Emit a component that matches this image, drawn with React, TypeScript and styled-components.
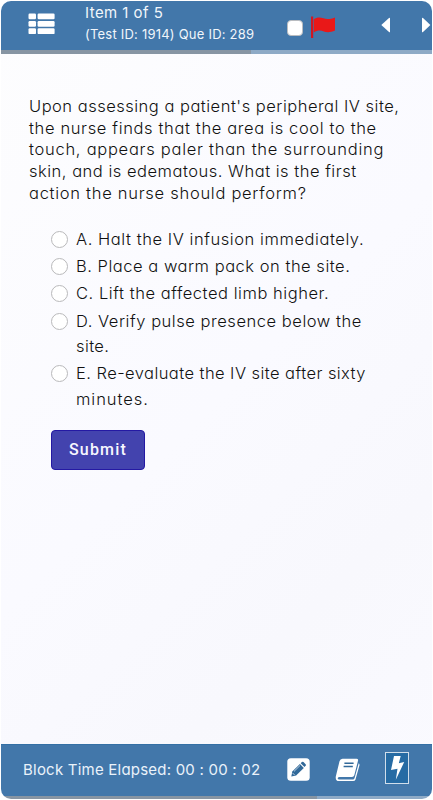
import React from 'react';
import styled, { createGlobalStyle } from 'styled-components';

const GlobalStyle = createGlobalStyle`
  * { box-sizing: border-box; }
  body {
    margin: 0;
    background: #fff;
    font-family: Inter, 'Open Sans', sans-serif;
    font-feature-settings: 'cv11';
  }
`;

const Screen = styled.main`
  width: 433px;
  height: 800px;
  padding: 1px;
  background: #fff;
`;

const Panel = styled.div`
  height: 798px;
  display: flex;
  flex-direction: column;
  overflow: hidden;
  border-radius: 10px;
  background: linear-gradient(135deg, #fdfdfe 0%, #fafaff 50%, #f8f8fd 75%, #fafaff 100%);
`;

const Header = styled.header`
  height: 49px;
  flex: none;
  display: flex;
  align-items: center;
  padding-left: 27px;
  background: #4277aa;
  color: #f1f6fb;
`;

const Track = styled.div<{ $thumb: number; $height: number }>`
  flex: none;
  height: ${(p) => p.$height}px;
  background: linear-gradient(to right, #8795a3 ${(p) => p.$thumb}px, #8eaac6 ${(p) => p.$thumb}px);
`;

const Titles = styled.div`
  width: 202px;
  margin-left: 30px;
  padding-bottom: 5px;
  display: flex;
  flex-direction: column;
`;

const TextLine = styled.span<{ $spacing: number }>`
  display: block;
  white-space: nowrap;
  letter-spacing: ${(p) => p.$spacing}px;
`;

const ItemTitle = styled(TextLine)`
  font-size: 15px;
  line-height: 22px;
`;

const ItemIds = styled(TextLine)`
  font-size: 13px;
  line-height: 20px;
`;

const MarkBox = styled.input`
  appearance: none;
  width: 16px;
  height: 16px;
  margin: 5px 7px 0 0;
  border: 1px solid #b9bcc0;
  border-radius: 4px;
  background: #fff;
`;

const IconButton = styled.button<{ $left?: number; $top?: number }>`
  display: flex;
  flex: none;
  padding: 0;
  margin-left: ${(p) => p.$left ?? 0}px;
  margin-top: ${(p) => p.$top ?? 0}px;
  border: 0;
  background: none;
  color: #fff;
`;

const Content = styled.section`
  flex: 1;
  padding: 42px 20px 0 28px;
  color: #111;
`;

const Question = styled.p`
  margin: 0;
  font-size: 16.5px;
  font-weight: 350;
  line-height: 21.7px;
`;

const Options = styled.div`
  margin: 22.5px 0 0 22px;
  display: flex;
  flex-direction: column;
  gap: 1.6px;
`;

const Option = styled.label`
  display: flex;
  align-items: flex-start;
  gap: 8px;
  font-size: 16.5px;
  font-weight: 350;
  line-height: 25.6px;
`;

const Radio = styled.input`
  appearance: none;
  width: 17px;
  height: 17px;
  flex: none;
  margin: 4px 0 0;
  border: 1px solid #b9b9bb;
  border-radius: 50%;
  background: #fff;
`;

const Submit = styled.button`
  width: 94px;
  height: 40px;
  margin: 17px 0 0 22px;
  padding: 0;
  border: 1px solid #2419a3;
  border-radius: 4px;
  background: #4343ae;
  color: #f7f7ff;
  font: 500 16px Roboto, sans-serif;
  letter-spacing: 1.2px;
`;

const Footer = styled.footer`
  height: 52px;
  flex: none;
  display: flex;
  align-items: center;
  padding: 0 0 2px 22px;
  border-top: 1px solid #3470a5;
  background: #4277aa;
  color: #eaf2fa;
`;

const Timer = styled(TextLine)`
  width: 264px;
  font-size: 15px;
  line-height: 20px;
`;

const Tools = styled.div`
  display: flex;
  align-items: center;
`;

const BoltFrame = styled(IconButton)`
  width: 24px;
  height: 32px;
  align-items: center;
  justify-content: center;
  margin-bottom: 3px;
  border: 1px solid #d0deeb;
  background: #266ba4;
`;

type Line = { text: string; spacing: number };

const question: Line[] = [
  { text: "Upon assessing a patient's peripheral IV site,", spacing: 0.5 },
  { text: 'the nurse finds that the area is cool to the', spacing: 0.64 },
  { text: 'touch, appears paler than the surrounding', spacing: 0.73 },
  { text: 'skin, and is edematous. What is the first', spacing: 0.51 },
  { text: 'action the nurse should perform?', spacing: 0.72 },
];

const options: Line[][] = [
  [{ text: 'A. Halt the IV infusion immediately.', spacing: 0.56 }],
  [{ text: 'B. Place a warm pack on the site.', spacing: 0.52 }],
  [{ text: 'C. Lift the affected limb higher.', spacing: 0.54 }],
  [
    { text: 'D. Verify pulse presence below the', spacing: 0.54 },
    { text: 'site.', spacing: 0.4 },
  ],
  [
    { text: 'E. Re-evaluate the IV site after sixty', spacing: 0.44 },
    { text: 'minutes.', spacing: 0.95 },
  ],
];

const ListIcon = () => (
  <svg width="27" height="22" viewBox="0 0 27 22" fill="#fff">
    {[0.5, 8, 15.3].map((y) => (
      <g key={y}>
        <rect x="0.5" y={y} width="7.5" height="5.8" rx="1.2" />
        <rect x="9.6" y={y} width="17" height="5.8" rx="1.2" />
      </g>
    ))}
  </svg>
);

const FlagIcon = () => (
  <svg width="26" height="24" viewBox="0 0 26 24">
    <path d="M1 1.5h2.2V23H1z" fill="#cf1723" />
    <path
      d="M3.8 4.2c3-2.2 6.2-2.2 9.6-.9 3.4 1.3 7 .9 11.6-.8v13c-4.2 1.9-7.8 2.2-11.2.9-3.4-1.4-6.8-1.1-10 1z"
      fill="#e91818"
    />
  </svg>
);

const ArrowIcon = ({ flip }: { flip?: boolean }) => (
  <svg width="9" height="16" viewBox="0 0 9 16" fill="#fff">
    <path d={flip ? 'M0 1.2Q0 .3 1 1L8.4 8 1 15Q0 15.7 0 14.8z' : 'M9 1.2Q9 .3 8 1L.3 8 8 15Q9 15.7 9 14.8z'} />
  </svg>
);

const EditIcon = () => (
  <svg width="23" height="23" viewBox="0 0 23 23">
    <rect x="0.3" y="0.3" width="22.4" height="22.4" rx="3.5" fill="#fff" />
    <g fill="#326999">
      <path d="M4.3 18.4l1-4.8 7.6-7.5 3.9 3.8-7.7 7.5z" />
      <path d="M13.7 5.3l1.2-1.2q.8-.7 1.6 0l2.1 2.1q.8.8 0 1.6l-1.1 1.2z" />
    </g>
    <path d="M7 13.4l6-5.9M5.600 15l2 2" stroke="#dce8f2" strokeWidth=".8" />
  </svg>
);

const BookIcon = () => (
  <svg width="25" height="24" viewBox="0 0 25 24">
    <path
      d="M7.5.8h14q2 0 1.5 2l-3.7 14.5q-.5 1.8-2.3 1.8H4.6q-1.5 0-1.8.8-.4 1.5 1.5 1.5h13.5q1.300 0 1.8-1.500l4.100-14.700q1.100.8.700 2.300l-3.900 14Q20 23 18 23H4Q.2 23 .8 18.500L4.500 3.300Q5.200.8 7.500.8z"
      fill="#fff"
    />
    <path d="M9.4 5.2h9.2M8.6 8.5h9.2" stroke="#326999" strokeWidth="1.5" />
  </svg>
);

const BoltIcon = () => (
  <svg width="15" height="26" viewBox="0 0 15 26" fill="#fff">
    <path d="M4 1h6.7L8.8 8.3l5.4-1.2L5.8 24.7l1.7-11L1 15z" />
  </svg>
);

export default function App() {
  return (
    <>
      <GlobalStyle />
      <Screen>
        <Panel>
          <Header>
            <IconButton $top={-3} aria-label="Question list">
              <ListIcon />
            </IconButton>
            <Titles>
              <ItemTitle $spacing={0.45}>Item 1 of 5</ItemTitle>
              <ItemIds $spacing={0.22}>(Test ID: 1914) Que ID: 289</ItemIds>
            </Titles>
            <MarkBox type="checkbox" aria-label="Mark item" />
            <IconButton $top={3} aria-label="Flag">
              <FlagIcon />
            </IconButton>
            <IconButton $left={45} $top={-1} aria-label="Previous">
              <ArrowIcon />
            </IconButton>
            <IconButton $left={32} $top={-1} aria-label="Next">
              <ArrowIcon flip />
            </IconButton>
          </Header>
          <Track $thumb={250} $height={4} />
          <Content>
            <Question>
              {question.map((l) => (
                <TextLine key={l.text} $spacing={l.spacing}>
                  {l.text}
                </TextLine>
              ))}
            </Question>
            <Options>
              {options.map((lines) => (
                <Option key={lines[0].text}>
                  <Radio type="radio" name="answer" />
                  <div>
                    {lines.map((l) => (
                      <TextLine key={l.text} $spacing={l.spacing}>
                        {l.text}
                      </TextLine>
                    ))}
                  </div>
                </Option>
              ))}
            </Options>
            <Submit>Submit</Submit>
          </Content>
          <Footer>
            <Timer $spacing={0.22}>Block Time Elapsed: 00 : 00 : 02</Timer>
            <Tools>
              <IconButton aria-label="Notes">
                <EditIcon />
              </IconButton>
              <IconButton $left={25} aria-label="Reference">
                <BookIcon />
              </IconButton>
              <BoltFrame $left={25} aria-label="Quick actions">
                <BoltIcon />
              </BoltFrame>
            </Tools>
          </Footer>
          <Track $thumb={316} $height={3} />
        </Panel>
      </Screen>
    </>
  );
}
